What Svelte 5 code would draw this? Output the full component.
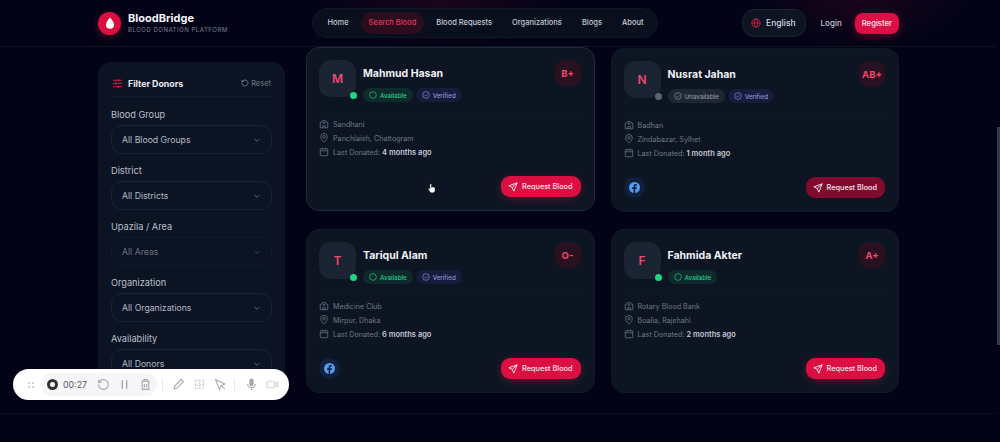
<script>
  const navItems = ['Home', 'Search Blood', 'Blood Requests', 'Organizations', 'Blogs', 'About'];

  const filters = [
    { label: 'Blood Group', value: 'All Blood Groups' },
    { label: 'District', value: 'All Districts' },
    { label: 'Upazila / Area', value: 'All Areas', disabled: true },
    { label: 'Organization', value: 'All Organizations' },
    { label: 'Availability', value: 'All Donors' }
  ];

  const donors = [
    { initial: 'M', name: 'Mahmud Hasan', group: 'B+', available: true, verified: true, org: 'Sandhani', place: 'Panchlaish, Chattogram', last: '4 months ago', hovered: true },
    { initial: 'N', name: 'Nusrat Jahan', group: 'AB+', available: false, verified: true, org: 'Badhan', place: 'Zindabazar, Sylhet', last: '1 month ago', facebook: true, dim: true },
    { initial: 'T', name: 'Tariqul Alam', group: 'O-', available: true, verified: true, org: 'Medicine Club', place: 'Mirpur, Dhaka', last: '6 months ago', facebook: true },
    { initial: 'F', name: 'Fahmida Akter', group: 'A+', available: true, verified: false, org: 'Rotary Blood Bank', place: 'Boalia, Rajshahi', last: '2 months ago' }
  ];
</script>

<div class="page">
  <div class="viewport">
    <header class="topbar">
      <div class="brand">
        <span class="logo">
          <svg viewBox="0 0 24 24" width="14" height="14"><path d="M12 2.500C12 2.500 5 10 5 15a7 7 0 0 0 14 0c0-5-7-12.500-7-12.500z" fill="#fff"/></svg>
        </span>
        <div>
          <div class="brand-name">BloodBridge</div>
          <div class="brand-sub">BLOOD DONATION PLATFORM</div>
        </div>
      </div>

      <nav class="nav">
        {#each navItems as item}
          <span class="nav-item" class:active={item === 'Search Blood'}>{item}</span>
        {/each}
      </nav>

      <div class="actions">
        <div class="lang">
          <svg viewBox="0 0 24 24" width="10" height="10" fill="none" stroke="#e11d48" stroke-width="2"><circle cx="12" cy="12" r="10"/><path d="M2 12h20M12 2c3 3 4 6.500 4 10s-1 7-4 10c-3-3-4-6.500-4-10s1-7 4-10z"/></svg>
          <span>English</span>
        </div>
        <span class="login">Login</span>
        <span class="register">Register</span>
      </div>
    </header>

    <div class="content">
      <aside class="filters">
        <div class="filters-head">
          <svg class="sliders" viewBox="0 0 24 24" width="11" height="11" fill="none" stroke="#e11d48" stroke-width="2"><path d="M2 5h20M2 12h20M2 19h20M15 2v6M8 9v6M14 16v6"/></svg>
          <span class="filters-title">Filter Donors</span>
          <span class="reset">
            <svg viewBox="0 0 24 24" width="8" height="8" fill="none" stroke="#8a94a6" stroke-width="2.200"><path d="M3 12a9 9 0 1 0 3-6.700L3 8M3 3v5h5"/></svg>
            Reset
          </span>
        </div>
        {#each filters as f}
          <div class="field" class:disabled={f.disabled}>
            <span class="field-label">{f.label}</span>
            <div class="select">
              <span>{f.value}</span>
              <svg viewBox="0 0 24 24" width="8" height="8" fill="none" stroke="#6b7688" stroke-width="2.500"><path d="M5 9l7 7 7-7"/></svg>
            </div>
          </div>
        {/each}
      </aside>

      <main class="cards">
        {#each donors as d}
          <article class="card" class:hovered={d.hovered}>
            <div class="card-top">
              <div class="avatar">
                {d.initial}
                <span class="dot" class:off={!d.available}></span>
              </div>
              <div class="who">
                <div class="name">{d.name}</div>
                <div class="badges">
                  {#if d.available}
                    <span class="badge green">
                      <svg viewBox="0 0 24 24" width="8" height="8" fill="none" stroke="currentColor" stroke-width="2"><circle cx="12" cy="12" r="10"/></svg>
                      Available
                    </span>
                  {:else}
                    <span class="badge grey">
                      <svg viewBox="0 0 24 24" width="8" height="8" fill="none" stroke="currentColor" stroke-width="2"><circle cx="12" cy="12" r="10"/><path d="M8 12.500l3 3 5-6"/></svg>
                      Unavailable
                    </span>
                  {/if}
                  {#if d.verified}
                    <span class="badge blue">
                      <svg viewBox="0 0 24 24" width="8" height="8" fill="none" stroke="currentColor" stroke-width="2"><circle cx="12" cy="12" r="10"/><path d="M8 12.500l3 3 5-6"/></svg>
                      Verified
                    </span>
                  {/if}
                </div>
              </div>
              <div class="group">{d.group}</div>
            </div>

            <div class="info">
              <div class="row">
                <svg viewBox="0 0 24 24" width="10" height="10" fill="none" stroke="#6b7688" stroke-width="1.800"><path d="M3 21V8l5-1V4h8v3l5 1v13zM9 21v-5h6v5M12 7v5M9.500 9.500h5"/></svg>
                <span>{d.org}</span>
              </div>
              <div class="row">
                <svg viewBox="0 0 24 24" width="10" height="10" fill="none" stroke="#6b7688" stroke-width="1.800"><path d="M12 22s8-7 8-13a8 8 0 0 0-16 0c0 6 8 13 8 13z"/><circle cx="12" cy="9" r="3"/></svg>
                <span>{d.place}</span>
              </div>
              <div class="row">
                <svg viewBox="0 0 24 24" width="10" height="10" fill="none" stroke="#6b7688" stroke-width="1.800"><rect x="3" y="4" width="18" height="17" rx="2"/><path d="M3 9h18M8 2v4M16 2v4"/></svg>
                <span>Last Donated: <b>{d.last}</b></span>
              </div>
            </div>

            <div class="card-foot">
              {#if d.facebook}
                <span class="fb">
                  <svg viewBox="0 0 24 24" width="11" height="11"><circle cx="12" cy="12" r="12" fill="#4f9cf0"/><path d="M13.500 24v-9h3l.5-3.500h-3.500V9.300c0-1 .5-1.800 1.900-1.800H17V4.400c-.5-.1-1.500-.2-2.500-.2-2.700 0-4.400 1.600-4.400 4.600v2.700H7V15h3.100v9z" fill="#0e1a33"/></svg>
                </span>
              {/if}
              <button class="request" class:dim={d.dim}>
                <svg viewBox="0 0 24 24" width="10" height="10" fill="none" stroke="#fff" stroke-width="2"><path d="M22 2L2 9l8 4 4 9zM22 2L10 13"/></svg>
                Request Blood
              </button>
            </div>
          </article>
        {/each}
      </main>
    </div>

    <footer class="footer"></footer>
  </div>

  <div class="scrollbar"><div class="thumb"></div></div>

  <svg class="cursor" viewBox="0 0 24 24" width="11" height="14"><path d="M8 2.500c1 0 1.600.7 1.600 1.700V11l1-.2v-1c1-.5 2-.2 2.400.4 1-.4 1.900 0 2.300.7 1.200-.2 2.200.5 2.200 1.800V17c0 3-2 5.500-5 5.500h-2c-2 0-3.200-1-4.300-2.800L3 14.500c-.6-1.200 1-2.300 2-1.300l1.400 1.500V4.200c0-1 .6-1.700 1.600-1.700z" fill="#fff" stroke="#222" stroke-width=".8"/></svg>

  <div class="recorder">
    <svg class="grip" viewBox="0 0 12 12" width="8" height="8" fill="#a8a8ae"><circle cx="3" cy="3" r="1.300"/><circle cx="9" cy="3" r="1.300"/><circle cx="3" cy="9" r="1.300"/><circle cx="9" cy="9" r="1.300"/></svg>
    <div class="rec-group">
      <span class="rec-dot"></span>
      <span class="time">00:27</span>
      <svg viewBox="0 0 24 24" width="13" height="13" fill="none" stroke="#a6a6ae" stroke-width="2"><path d="M3 12a9 9 0 1 0 3-6.700L3 8M3 3v5h5"/></svg>
      <svg viewBox="0 0 24 24" width="13" height="13" fill="none" stroke="#a6a6ae" stroke-width="2.500"><path d="M8 4v16M16 4v16"/></svg>
      <svg viewBox="0 0 24 24" width="13" height="13" fill="none" stroke="#a6a6ae" stroke-width="2"><path d="M4 6h16M9 6V3h6v3M6 6v15h12V6M10 11v6M14 11v6"/></svg>
    </div>
    <span class="sep first"></span>
    <svg viewBox="0 0 24 24" width="13" height="13" fill="none" stroke="#a6a6ae" stroke-width="2"><path d="M4 20l1-5L17 3l4 4L9 19z"/></svg>
    <svg viewBox="0 0 24 24" width="13" height="13" fill="none" stroke="#bcbcc2" stroke-width="2" stroke-dasharray="2 3"><path d="M3 5h18M3 12h18M3 19h18M5 3v18M12 3v18M19 3v18"/></svg>
    <svg viewBox="0 0 24 24" width="13" height="13" fill="none" stroke="#a6a6ae" stroke-width="2"><path d="M3 3l7 18 3-7 7-3zM14 14l6 6"/></svg>
    <span class="sep second"></span>
    <svg viewBox="0 0 24 24" width="13" height="13" fill="none" stroke="#a6a6ae" stroke-width="2"><rect x="9" y="2" width="6" height="12" rx="3" fill="#a6a6ae"/><path d="M5 11a7 7 0 0 0 14 0M12 18v4"/></svg>
    <svg viewBox="0 0 24 24" width="13" height="13" fill="none" stroke="#d0d0d6" stroke-width="2"><rect x="2" y="6" width="14" height="12" rx="2"/><path d="M16 11l6-3v8l-6-3z"/></svg>
  </div>
</div>

<style>
  :global(body) {
    margin: 0;
    background: #020316;
  }

  .page {
    position: relative;
    display: flex;
    width: 1000px;
    height: 442px;
    overflow: hidden;
    font-family: Inter, "Liberation Sans", sans-serif;
    color: #e5e9f0;
    background:
      radial-gradient(ellipse 130px 50px at 440px 0, rgba(120, 10, 50, 0.2), transparent),
      radial-gradient(ellipse 110px 50px at 860px 0, rgba(120, 10, 50, 0.2), transparent),
      #020316;
  }

  .viewport {
    flex: 1;
    display: flex;
    flex-direction: column;
    min-width: 0;
  }

  .topbar {
    height: 46px;
    flex: none;
    padding: 0 97px 0 98px;
    display: flex;
    align-items: center;
    justify-content: space-between;
    border-bottom: 1px solid #10141f;
  }

  .brand {
    display: flex;
    align-items: center;
    gap: 7px;
  }

  .logo {
    width: 23px;
    height: 23px;
    border-radius: 50%;
    background: #d90f3f;
    box-shadow: 0 2px 8px rgba(225, 29, 72, 0.35);
    display: flex;
    align-items: center;
    justify-content: center;
  }

  .brand-name {
    font-size: 11px;
    line-height: 13px;
    font-weight: 700;
    color: #f4f6fa;
  }

  .brand-sub {
    font-size: 6px;
    line-height: 9px;
    letter-spacing: 0.52px;
    color: #79828f;
  }

  .nav {
    height: 30px;
    box-sizing: border-box;
    padding: 0 5px 0 6px;
    display: flex;
    align-items: center;
    gap: 4px;
    border-radius: 15px;
    background: #0a0f1d;
    border: 1px solid #111726;
  }

  .nav-item {
    font-size: 7.500px;
    font-weight: 500;
    color: #c4cad4;
    padding: 0 8px;
    line-height: 22px;
    border-radius: 11px;
  }

  .nav-item.active {
    color: #e0355f;
    background: #2a0e1e;
  }

  .actions {
    display: flex;
    align-items: center;
  }

  .lang {
    height: 28px;
    box-sizing: border-box;
    padding: 0 9px 0 8px;
    margin-right: 15px;
    display: flex;
    align-items: center;
    gap: 5px;
    font-size: 8.500px;
    font-weight: 500;
    color: #d5dae3;
    background: #0d1422;
    border: 1px solid #1b2333;
    border-radius: 12px;
  }

  .login {
    font-size: 8px;
    font-weight: 500;
    color: #c4cad4;
    margin-right: 13px;
  }

  .register {
    font-size: 7.700px;
    font-weight: 500;
    color: #fde7ec;
    line-height: 21px;
    padding: 0 7px;
    border-radius: 8px;
    background: #dc0f45;
    box-shadow: 0 2px 8px rgba(225, 29, 72, 0.35);
  }

  .content {
    flex: 1;
    min-height: 0;
    padding: 1px 97px 0 98px;
    display: grid;
    grid-template-columns: 187px 1fr;
    gap: 21px;
    align-items: start;
  }

  .filters {
    margin-top: 14px;
    height: 331px;
    box-sizing: border-box;
    padding: 13px;
    border-radius: 13px;
    background: #0c1322;
  }

  .filters-head {
    display: flex;
    align-items: center;
    gap: 5px;
    height: 16px;
    padding: 0 1px 5px;
    margin-bottom: 12px;
    border-bottom: 1px solid #131a29;
  }

  .filters-title {
    font-size: 8.800px;
    font-weight: 700;
    color: #e8ecf2;
    flex: 1;
  }

  .reset {
    display: flex;
    align-items: center;
    gap: 2px;
    font-size: 7.500px;
    color: #6f7888;
  }

  .field {
    height: 56px;
  }

  .field-label {
    display: block;
    font-size: 9.200px;
    line-height: 12px;
    color: #b9c0cc;
    margin-bottom: 4px;
  }

  .select {
    height: 29px;
    box-sizing: border-box;
    padding: 0 10px;
    display: flex;
    align-items: center;
    justify-content: space-between;
    font-size: 8.700px;
    color: #b4bbc7;
    background: #0c1424;
    border: 1px solid #1a2233;
    border-radius: 11px;
  }

  .field.disabled .select {
    opacity: 0.55;
  }

  .cards {
    display: grid;
    grid-template-columns: 1fr 1fr;
    gap: 17px 16px;
  }

  .card {
    height: 164px;
    box-sizing: border-box;
    padding: 12px 13px 13px 12px;
    display: flex;
    flex-direction: column;
    border: 1px solid #101826;
    border-radius: 13px;
    background: #0d1523;
  }

  .card.hovered {
    transform: translateY(-1px);
    border-color: #1f2a3b;
  }

  .card-top {
    display: flex;
    align-items: flex-start;
    padding-bottom: 11px;
    border-bottom: 1px solid #111827;
  }

  .avatar {
    position: relative;
    width: 37px;
    height: 37px;
    flex: none;
    margin-right: 7px;
    display: flex;
    align-items: center;
    justify-content: center;
    font-size: 12px;
    font-weight: 600;
    color: #f0486e;
    background: #1b2433;
    border-radius: 12px;
  }

  .dot {
    position: absolute;
    right: -1px;
    bottom: -2px;
    width: 7px;
    height: 7px;
    border-radius: 50%;
    background: #1ed67f;
  }

  .dot.off {
    background: #5b6472;
  }

  .who {
    flex: 1;
    padding-top: 6px;
  }

  .name {
    font-size: 10.500px;
    line-height: 15px;
    font-weight: 700;
    color: #eef1f5;
    margin-bottom: 7px;
  }

  .badges {
    display: flex;
    gap: 3px;
  }

  .badge {
    display: flex;
    align-items: center;
    gap: 3px;
    height: 14px;
    padding: 0 6px;
    font-size: 6.200px;
    font-weight: 500;
    border-radius: 7px;
  }

  .badge.green {
    color: #2cc98a;
    background: #0d2a2c;
  }

  .badge.grey {
    color: #8d95a3;
    background: #1e2634;
  }

  .badge.blue {
    color: #8d95d8;
    background: #171c3c;
  }

  .group {
    min-width: 26px;
    height: 26px;
    flex: none;
    display: flex;
    align-items: center;
    justify-content: center;
    font-size: 9.500px;
    font-weight: 700;
    color: #f0486e;
    background: #2a1122;
    border-radius: 10px;
  }

  .info {
    padding-top: 3px;
  }

  .row {
    height: 14.200px;
    display: flex;
    align-items: center;
    gap: 4px;
    font-size: 7.200px;
    color: #6f7888;
  }

  .row b {
    font-size: 7.500px;
    font-weight: 600;
    color: #c4cad4;
  }

  .card-foot {
    margin-top: auto;
    display: flex;
    align-items: center;
    justify-content: flex-end;
  }

  .fb {
    width: 21px;
    height: 21px;
    margin-right: auto;
    display: flex;
    align-items: center;
    justify-content: center;
    background: #10203f;
    border-radius: 50%;
  }

  .request {
    height: 21px;
    padding: 0 8px 0 7px;
    display: flex;
    align-items: center;
    gap: 4px;
    border: 0;
    border-radius: 9px;
    font-family: inherit;
    font-size: 7.300px;
    font-weight: 500;
    color: #fbe3e9;
    background: #db0f42;
    box-shadow: 0 2px 9px rgba(225, 29, 72, 0.3);
  }

  .request.dim {
    background: #7f0b2e;
    box-shadow: none;
  }

  .footer {
    height: 28px;
    flex: none;
    border-top: 1px solid #0c101b;
  }

  .scrollbar {
    width: 4px;
    flex: none;
    padding-top: 127px;
  }

  .thumb {
    height: 218px;
    margin-left: 1px;
    background: #303b4c;
  }

  .cursor {
    position: absolute;
    left: 427px;
    top: 181px;
  }

  .recorder {
    position: absolute;
    left: 13px;
    top: 369px;
    width: 276px;
    height: 31px;
    box-sizing: border-box;
    padding: 0 0 0 14px;
    display: flex;
    align-items: center;
    gap: 8px;
    background: #fff;
    border-radius: 16px;
  }

  .grip {
    margin-right: -2px;
  }

  .rec-group {
    display: flex;
    align-items: center;
    height: 23px;
    padding: 0 5px 0 6px;
    gap: 8px;
    background: #f6f6f8;
    border-radius: 11px;
  }

  .rec-dot {
    width: 5px;
    height: 5px;
    margin-right: -3px;
    border: 3px solid #333;
    border-radius: 50%;
    background: #f6f6f8;
  }

  .time {
    font-size: 8.800px;
    color: #55555c;
    margin-right: 2px;
  }

  .sep {
    width: 1px;
    height: 13px;
    background: #e8e8ec;
  }

  .sep.first {
    margin: 0 1px 0 -3px;
  }

  .sep.second {
    margin: 0 2px 0 -1px;
  }
</style>
